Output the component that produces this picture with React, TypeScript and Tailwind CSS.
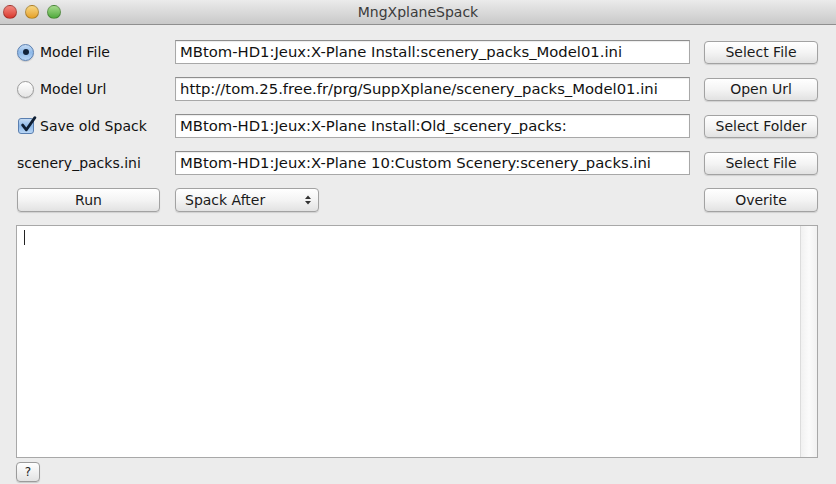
import * as React from "react"

const font = { fontFamily: '"DejaVu Sans", "Liberation Sans", sans-serif' }

function AquaButton({ label, className = "" }: { label: string; className?: string }) {
  return (
    <button
      className={`h-[23px] rounded-[4px] border border-[#a2a2a2] bg-gradient-to-b from-[#ffffff] via-[#f4f4f4] to-[#e2e2e2] text-[14px] text-[#1a1a1a] shadow-[0_1px_1px_rgba(0,0,0,0.12)] ${className}`}
    >
      {label}
    </button>
  )
}

function Field({ value }: { value: string }) {
  return (
    <div className="flex h-[24px] items-center overflow-hidden whitespace-nowrap border border-[#a8a8a8] border-t-[#8e8e8e] bg-white pl-[4px] text-[14.8px] text-[#111] shadow-[inset_0_1px_1px_rgba(0,0,0,0.08)]">
      {value}
    </div>
  )
}

function Radio({ checked }: { checked?: boolean }) {
  return checked ? (
    <span className="flex h-[17px] w-[17px] items-center justify-center rounded-full border border-[#5a7fb0] bg-gradient-to-b from-[#c6dcf4] via-[#8db8e8] to-[#b9d6f5] shadow-[0_1px_1px_rgba(0,0,0,0.15)]">
      <span className="h-[6px] w-[6px] rounded-full bg-[#10223a]" />
    </span>
  ) : (
    <span className="h-[17px] w-[17px] rounded-full border border-[#9b9b9b] bg-gradient-to-b from-[#ffffff] to-[#e4e4e4] shadow-[0_1px_1px_rgba(0,0,0,0.12)]" />
  )
}

function Checkbox() {
  return (
    <span className="relative flex h-[16px] w-[16px] items-center justify-center rounded-[3px] border border-[#5a7fb0] bg-gradient-to-b from-[#c6dcf4] via-[#8db8e8] to-[#b9d6f5]">
      <svg viewBox="0 0 16 16" className="absolute -top-[3px] left-[1px] h-[17px] w-[17px]">
        <path d="M2.5 8.5 L6 13 L14 1.5" fill="none" stroke="#0e1e33" strokeWidth="2.6" strokeLinecap="round" strokeLinejoin="round" />
      </svg>
    </span>
  )
}

function Light({ color }: { color: string }) {
  return <span className={`h-[14px] w-[14px] rounded-full border border-black/25 ${color}`} />
}

const row = "grid h-[24px] grid-cols-[145px_515px_114px] items-center gap-x-[14px]"

export default function App() {
  return (
    <div className="flex h-[484px] w-[836px] flex-col overflow-hidden bg-[#ececec]" style={font}>
      {/* title bar */}
      <div className="relative flex h-[25px] shrink-0 items-center border-b border-[#8f8f8f] bg-gradient-to-b from-[#ebebeb] to-[#c9c9c9]">
        <div className="flex gap-[8px] pl-[3px]">
          <Light color="bg-gradient-to-b from-[#f3867f] to-[#d8352c]" />
          <Light color="bg-gradient-to-b from-[#f8d77f] to-[#e5a121]" />
          <Light color="bg-gradient-to-b from-[#a5dc8c] to-[#4ea93a]" />
        </div>
        <span className="absolute inset-x-0 text-center text-[14px] text-[#3b3b3b]">MngXplaneSpack</span>
      </div>

      {/* form */}
      <div className="flex flex-col gap-[13px] pl-[16px] pr-[18px] pt-[15px]">
        <div className={row}>
          <label className="flex items-center gap-[6px] pl-[1px] text-[14px] text-[#111]">
            <Radio checked />
            Model File
          </label>
          <Field value="MBtom-HD1:Jeux:X-Plane Install:scenery_packs_Model01.ini" />
          <AquaButton label="Select File" />
        </div>
        <div className={row}>
          <label className="flex items-center gap-[6px] pl-[1px] text-[14px] text-[#111]">
            <Radio />
            Model Url
          </label>
          <Field value="http://tom.25.free.fr/prg/SuppXplane/scenery_packs_Model01.ini" />
          <AquaButton label="Open Url" />
        </div>
        <div className={row}>
          <label className="flex items-center gap-[6px] pl-[2px] text-[14px] text-[#111]">
            <Checkbox />
            Save old Spack
          </label>
          <Field value="MBtom-HD1:Jeux:X-Plane Install:Old_scenery_packs:" />
          <AquaButton label="Select Folder" />
        </div>
        <div className={row}>
          <span className="pl-[1px] text-[14px] text-[#111]">scenery_packs.ini</span>
          <Field value="MBtom-HD1:Jeux:X-Plane 10:Custom Scenery:scenery_packs.ini" />
          <AquaButton label="Select File" />
        </div>
        <div className="flex h-[24px] items-center">
          <AquaButton label="Run" className="ml-[1px] h-[24px] w-[143px]" />
          <button className="ml-[15px] flex h-[24px] w-[144px] items-center justify-between rounded-[4px] border border-[#a2a2a2] bg-gradient-to-b from-[#ffffff] via-[#f4f4f4] to-[#e2e2e2] pl-[9px] pr-[6px] text-[14px] text-[#1a1a1a] shadow-[0_1px_1px_rgba(0,0,0,0.12)]">
            Spack After
            <svg viewBox="0 0 8 12" className="h-[12px] w-[8px]">
              <path d="M1 5 L4 1.5 L7 5 Z M1 7 L4 10.5 L7 7 Z" fill="#333" />
            </svg>
          </button>
          <AquaButton label="Overite" className="ml-auto h-[24px] w-[114px]" />
        </div>
        <div className="relative flex h-[233px] border border-[#a8a8a8] bg-white">
          <div className="flex-1 pl-[7px] pt-[4px]">
            <span className="block h-[15px] w-[1px] bg-[#222]" />
          </div>
          <div className="w-[17px] border-l border-[#dcdcdc] bg-gradient-to-r from-[#f1f1f1] via-[#fbfbfb] to-[#f1f1f1]" />
        </div>
      </div>
      <div className="pl-[16px] pt-[4px]">
        <button className="flex h-[20px] w-[24px] items-center justify-center rounded-[4px] border border-[#9b9b9b] bg-gradient-to-b from-[#ffffff] to-[#e3e3e3] text-[12px] text-[#222] shadow-[0_1px_1px_rgba(0,0,0,0.15)]">
          ?
        </button>
      </div>
    </div>
  )
}
